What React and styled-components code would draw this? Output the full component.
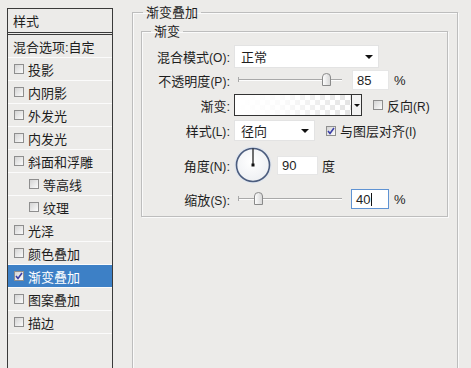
import React from 'react'
import styled, { createGlobalStyle } from 'styled-components'

const GlobalStyle = createGlobalStyle`
  html, body {
    margin: 0;
    padding: 0;
    background: #ecebe9;
  }
  body {
    font-family: "Liberation Sans", "Noto Sans CJK SC", sans-serif;
    font-size: 13px;
    color: #1e1e1e;
    overflow: hidden;
  }
`

const Page = styled.div`
  display: flex;
  align-items: flex-start;
  width: 471px;
  height: 368px;
  overflow: hidden;
`

/* ---------- left style list ---------- */

const StylePanel = styled.div`
  flex-shrink: 0;
  margin: 8px 0 0 7px;
  width: 106px;
  height: 380px;
  box-sizing: border-box;
  border: 1px solid #3a3a3a;
  border-bottom: none;
`

const PanelHeader = styled.div`
  height: 23px;
  display: flex;
  align-items: center;
  padding-left: 5px;
  border-bottom: 3px double #3a3a3a;
`

const BlendRow = styled.div`
  height: 22px;
  display: flex;
  align-items: center;
  padding-left: 5px;
  border-bottom: 1px solid #fbfbfb;
`

const StyleRow = styled.div`
  height: 22px;
  display: flex;
  align-items: center;
  gap: 4px;
  padding-left: ${p => (p.$indent ? 21 : 6)}px;
  border-bottom: 1px solid #fbfbfb;
  background: ${p => (p.$active ? '#3d80c6' : 'transparent')};
  color: ${p => (p.$active ? '#fff' : '#1e1e1e')};
`

const Box = styled.span`
  flex-shrink: 0;
  width: 10px;
  height: 10px;
  box-sizing: border-box;
  border: 1px solid #8e8e8e;
  background: linear-gradient(135deg, #d4d4d4, #fbfbfb);
  display: flex;
  align-items: center;
  justify-content: center;
`

const Checkbox = ({ checked }) => (
  <Box>
    {checked && (
      <svg width="8" height="8" viewBox="0 0 8 8">
        <path d="M1 4 L3 6.5 L7 1" fill="none" stroke="#3b3fa8" strokeWidth="1.6" />
      </svg>
    )}
  </Box>
)

/* ---------- right groups ---------- */

const OuterGroup = styled.fieldset`
  flex-shrink: 0;
  margin: 5px 0 0 19px;
  width: 326px;
  height: 400px;
  box-sizing: border-box;
  padding: 4px 9px 0 8px;
  border: 1px solid #bdbdbd;
  box-shadow: inset 1px 1px 0 #fafafa, 1px 1px 0 #fafafa;
  min-width: 0;
`

const Legend = styled.legend`
  padding: 0 3px;
  margin-left: ${p => p.$offset}px;
  line-height: 15px;
  font-size: 13px;
`

const InnerGroup = styled.fieldset`
  margin: 0;
  width: 307px;
  box-sizing: border-box;
  padding: 6px 0 7px 0;
  border: 1px solid #bdbdbd;
  box-shadow: inset 1px 1px 0 #fafafa, 1px 1px 0 #fafafa;
  min-width: 0;
`

const Field = styled.div`
  display: grid;
  grid-template-columns: 88px 1fr;
  column-gap: 4px;
  align-items: center;
  height: ${p => p.$h}px;
  margin-top: ${p => p.$mt || 0}px;
`

const Label = styled.span`
  text-align: right;
  white-space: nowrap;
`

const Key = styled.span`
  font-size: 12px;
`

const Controls = styled.div`
  display: flex;
  align-items: center;
  height: 100%;
`

const Select = styled.div`
  width: ${p => p.$w}px;
  height: ${p => p.$h}px;
  box-sizing: border-box;
  background: #fff;
  border: 1px solid #e3e3e3;
  display: flex;
  align-items: center;
  justify-content: space-between;
  padding: 0 5px 0 6px;
`

const Arrow = styled.span`
  width: 0;
  height: 0;
  border-left: ${p => p.$s || 4}px solid transparent;
  border-right: ${p => p.$s || 4}px solid transparent;
  border-top: ${p => p.$s || 4}px solid #111;
`

const TrackWrap = styled.div`
  position: relative;
  width: 104px;
  height: 14px;
  margin-left: 4px;
`

const TrackLine = styled.div`
  position: absolute;
  left: 0;
  right: 0;
  top: 6px;
  height: 1px;
  background: #a9a9a9;
  box-shadow: 0 1px 0 #fdfdfd;
  &::before {
    content: '';
    position: absolute;
    left: 0;
    top: -2px;
    width: 1px;
    height: 5px;
    background: #a9a9a9;
  }
`

const Thumb = styled.svg`
  position: absolute;
  top: 0;
  left: ${p => p.$pos - 4}px;
`

const Slider = ({ pos }) => (
  <TrackWrap>
    <TrackLine />
    <Thumb $pos={pos} width="9" height="13" viewBox="0 0 9 13">
      <defs>
        <linearGradient id="thumbFill" x1="0" y1="0" x2="1" y2="0">
          <stop offset="0" stopColor="#ffffff" />
          <stop offset="1" stopColor="#d6d6d6" />
        </linearGradient>
      </defs>
      <path d="M0.5 12.5 V4 Q0.5 0.5 4.5 0.5 Q8.5 0.5 8.5 4 V12.5 Z" fill="url(#thumbFill)" stroke="#8a8a8a" />
    </Thumb>
  </TrackWrap>
)

const NumInput = styled.div`
  width: ${p => p.$w}px;
  height: ${p => p.$h || 20}px;
  margin-left: ${p => p.$ml}px;
  box-sizing: border-box;
  background: #fff;
  border: 1px solid ${p => (p.$focus ? '#5f93d3' : '#e6e6e6')};
  display: flex;
  align-items: center;
  padding-left: 4px;
`

const Caret = styled.span`
  width: 1px;
  height: 13px;
  background: #111;
  margin-left: 1px;
`

const Unit = styled.span`
  margin-left: ${p => p.$ml || 4}px;
`

const GradientBox = styled.div`
  width: 128px;
  height: 22px;
  box-sizing: border-box;
  border: 1px solid #333;
  display: flex;
`

const Swatch = styled.div`
  flex: 1;
  background:
    linear-gradient(to right, #fff 0%, rgba(255, 255, 255, 0.85) 40%, rgba(255, 255, 255, 0) 100%),
    repeating-conic-gradient(#e4e4e4 0% 25%, #ffffff 0% 50%) 0 0 / 10px 10px;
`

const DropBtn = styled.div`
  width: 9px;
  border-left: 1px solid #333;
  background: #f3f3f3;
  display: flex;
  align-items: center;
  justify-content: center;
`

const CheckLabel = styled.label`
  display: flex;
  align-items: center;
  gap: 4px;
  margin-left: 11px;
  white-space: nowrap;
`

const Dial = () => (
  <svg width="38" height="38" viewBox="0 0 38 38">
    <defs>
      <radialGradient id="dialFill" cx="0.45" cy="0.4" r="0.6">
        <stop offset="0" stopColor="#ffffff" />
        <stop offset="1" stopColor="#eef0f3" />
      </radialGradient>
    </defs>
    <circle cx="19" cy="19" r="17.5" fill="none" stroke="#dfe5ee" strokeWidth="2" />
    <circle cx="19" cy="19" r="16.5" fill="url(#dialFill)" stroke="#4c5d7e" strokeWidth="1.6" />
    <line x1="19" y1="19" x2="19" y2="2.5" stroke="#111" strokeWidth="1.2" />
    <rect x="17.5" y="17.5" width="3" height="3" fill="#111" />
  </svg>
)

const styles = [
  { name: '投影' },
  { name: '内阴影' },
  { name: '外发光' },
  { name: '内发光' },
  { name: '斜面和浮雕' },
  { name: '等高线', indent: true },
  { name: '纹理', indent: true },
  { name: '光泽' },
  { name: '颜色叠加' },
  { name: '渐变叠加', active: true },
  { name: '图案叠加' },
  { name: '描边' },
]

export default function App() {
  return (
    <>
      <GlobalStyle />
      <Page>
        <StylePanel>
          <PanelHeader>样式</PanelHeader>
          <BlendRow>混合选项:自定</BlendRow>
          {styles.map(s => (
            <StyleRow key={s.name} $indent={s.indent} $active={s.active}>
              <Checkbox checked={s.active} />
              {s.name}
            </StyleRow>
          ))}
        </StylePanel>

        <OuterGroup>
          <Legend $offset={2}>渐变叠加</Legend>
          <InnerGroup>
            <Legend $offset={9}>渐变</Legend>

            <Field $h={23}>
              <Label>混合模式<Key>(O)</Key>:</Label>
              <Controls>
                <Select $w={145} $h={23}>
                  正常
                  <Arrow />
                </Select>
              </Controls>
            </Field>

            <Field $h={20} $mt={2}>
              <Label>不透明度<Key>(P)</Key>:</Label>
              <Controls>
                <Slider pos={88} />
                <NumInput $w={37} $ml={10}>85</NumInput>
                <Unit $ml={5}>%</Unit>
              </Controls>
            </Field>

            <Field $h={22} $mt={4}>
              <Label>渐变:</Label>
              <Controls>
                <GradientBox>
                  <Swatch />
                  <DropBtn>
                    <Arrow $s={3} />
                  </DropBtn>
                </GradientBox>
                <CheckLabel>
                  <Checkbox />
                  <span>反向<Key>(R)</Key></span>
                </CheckLabel>
              </Controls>
            </Field>

            <Field $h={21} $mt={4}>
              <Label>样式<Key>(L)</Key>:</Label>
              <Controls>
                <Select $w={81} $h={21}>
                  径向
                  <Arrow />
                </Select>
                <CheckLabel>
                  <Checkbox checked />
                  <span>与图层对齐<Key>(I)</Key></span>
                </CheckLabel>
              </Controls>
            </Field>

            <Field $h={37} $mt={5}>
              <Label>角度<Key>(N)</Key>:</Label>
              <Controls>
                <Dial />
                <NumInput $w={41} $h={19} $ml={5}>90</NumInput>
                <Unit>度</Unit>
              </Controls>
            </Field>

            <Field $h={20} $mt={6}>
              <Label>缩放<Key>(S)</Key>:</Label>
              <Controls>
                <Slider pos={20} />
                <NumInput $w={38} $ml={9} $focus>
                  40<Caret />
                </NumInput>
                <Unit $ml={5}>%</Unit>
              </Controls>
            </Field>
          </InnerGroup>
        </OuterGroup>
      </Page>
    </>
  )
}
